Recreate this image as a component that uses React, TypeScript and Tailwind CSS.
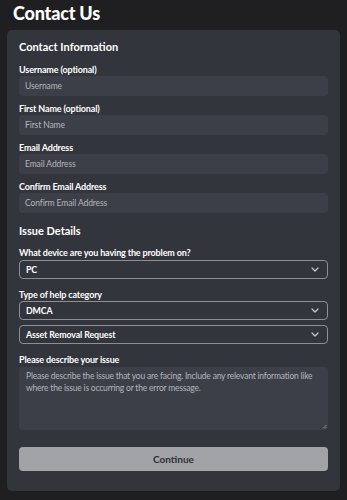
import React from "react";

const font = { fontFamily: "Lato, Inter, 'Noto Sans', sans-serif" };

function Chevron() {
  return (
    <svg width="8" height="5" viewBox="0 0 8 5" fill="none" className="shrink-0">
      <path d="M1 1l3 3 3-3" stroke="#c8c9cd" strokeWidth="1.2" strokeLinecap="round" strokeLinejoin="round" />
    </svg>
  );
}

function Label({ children, className = "" }: { children: React.ReactNode; className?: string }) {
  return <label className={"block text-[9px] leading-[12px] tracking-[-0.15px] font-bold text-white " + className}>{children}</label>;
}

function Field({ label, placeholder }: { label: string; placeholder: string }) {
  return (
    <div className="flex flex-col">
      <Label>{label}</Label>
      <div className="h-[20px] rounded-[4px] bg-[#3c3f47] flex items-center px-[6px] text-[8.5px] tracking-[-0.1px] text-[#b4b6bb]">
        {placeholder}
      </div>
    </div>
  );
}

function Select({ value }: { value: string }) {
  return (
    <div className="h-[19px] rounded-[4px] border border-[#8d8f95] bg-[#33353c] flex items-center justify-between pl-[6px] pr-[8px] text-[8.8px] tracking-[-0.1px] font-bold text-white">
      <span>{value}</span>
      <Chevron />
    </div>
  );
}

export default function App() {
  return (
    <div className="w-[347px] h-[500px] bg-[#1f1f22] overflow-hidden" style={font}>
      <h1 className="text-[18px] leading-[24px] tracking-[-0.2px] font-black text-white pl-[13px] pt-[1px] h-[30px]">Contact Us</h1>
      <div className="mx-[7px] rounded-[5px] bg-[#33353c] px-[12px] pt-[10px] pb-[20px]">
        <h2 className="text-[11px] leading-[14px] font-bold text-white mb-[10px]">Contact Information</h2>
        <div className="flex flex-col gap-[7px]">
          <Field label="Username (optional)" placeholder="Username" />
          <Field label="First Name (optional)" placeholder="First Name" />
          <Field label="Email Address" placeholder="Email Address" />
          <Field label="Confirm Email Address" placeholder="Confirm Email Address" />
        </div>
        <h2 className="text-[11px] leading-[14px] font-bold text-white mt-[11px] mb-[9px]">Issue Details</h2>
        <Label className="mb-[1px]">What device are you having the problem on?</Label>
        <Select value="PC" />
        <Label className="mt-[10px]">Type of help category</Label>
        <div className="flex flex-col gap-[5px]">
          <Select value="DMCA" />
          <Select value="Asset Removal Request" />
        </div>
        <Label className="mt-[10px] mb-[1px]">Please describe your issue</Label>
        <div className="relative h-[63px] rounded-[4px] bg-[#3c3f47] px-[7px] py-[3px] text-[8.5px] leading-[12px] tracking-[-0.2px] text-[#b4b6bb]">
          Please describe the issue that you are facing. Include any relevant information like where the issue is occurring or the error message.
          <svg className="absolute right-[1px] bottom-[1px]" width="5" height="5" viewBox="0 0 5 5">
            <path d="M4.5 1L1 4.5M4.5 3L3 4.5" stroke="#9a9ca2" strokeWidth="0.8" />
          </svg>
        </div>
        <button className="mt-[17px] w-full h-[24px] rounded-[4px] bg-[#a2a3a7] text-[10px] font-bold text-[#2e3036]">Continue</button>
      </div>
    </div>
  );
}
